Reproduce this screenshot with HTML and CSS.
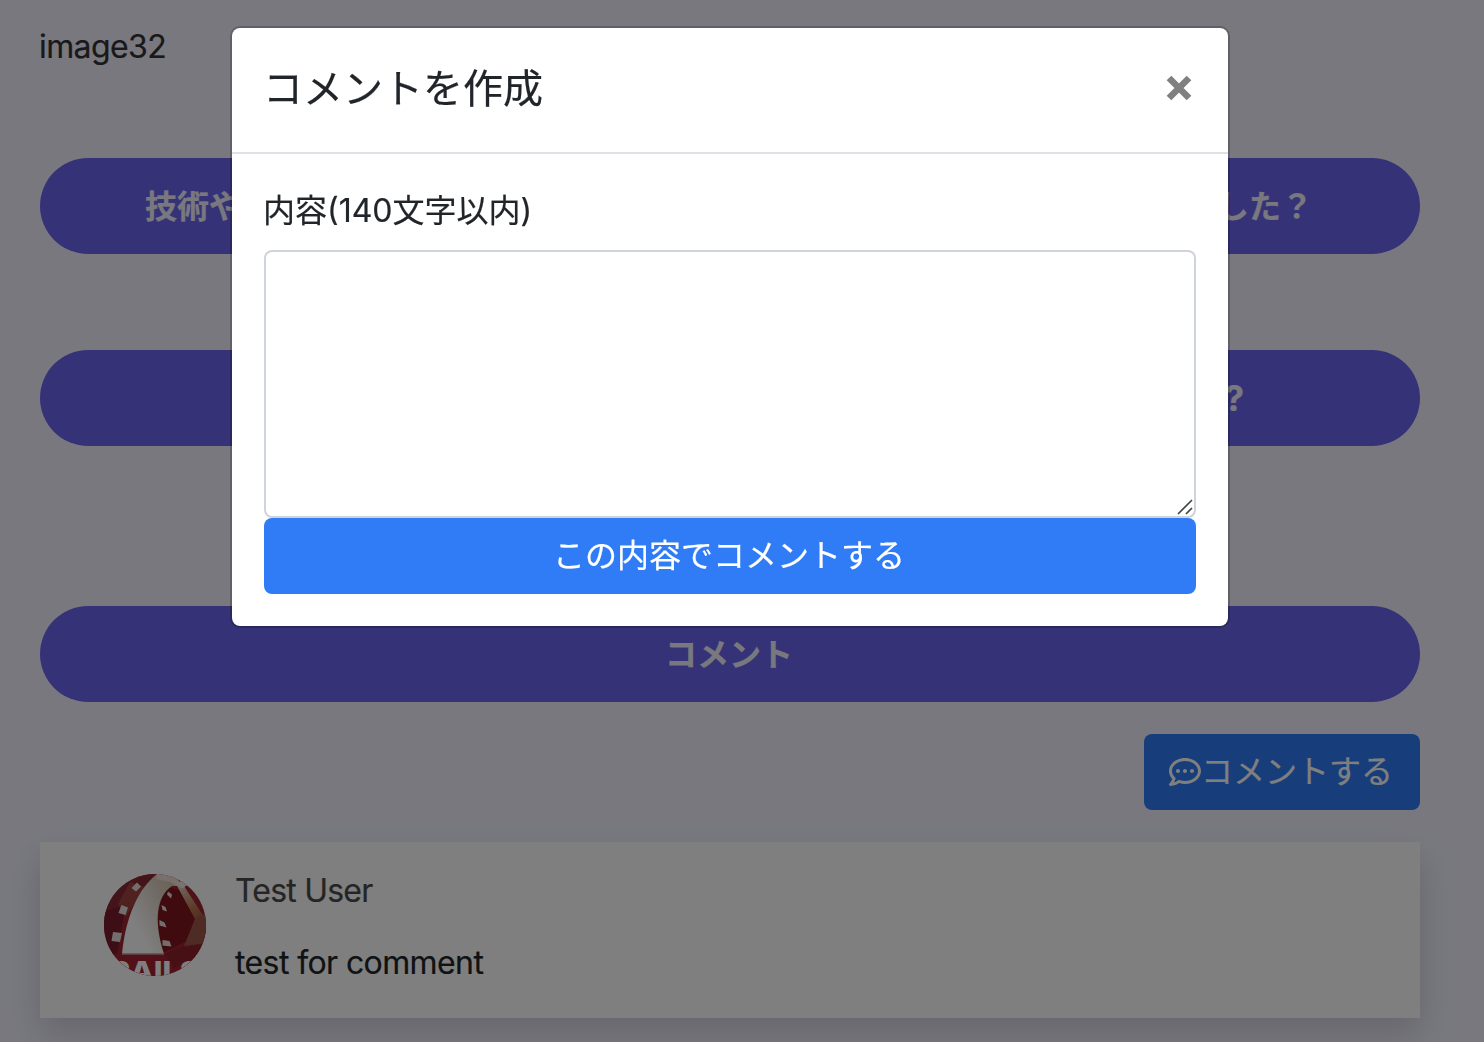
FILE: index.html
```html
<!DOCTYPE html>
<html lang="ja">
<head>
<meta charset="utf-8">
<title>コメントを作成</title>
<link rel="stylesheet" href="styles.css">
</head>
<body>
<main class="page">
  <p class="image-name">image32</p>
  <h2 class="pill pill-first"><span>技術や</span><span>した？</span></h2>
  <h2 class="pill pill-second"><span>?</span></h2>
  <h2 class="pill pill-comment"><span>コメント</span></h2>
  <div class="actions">
    <button class="btn btn-open" type="button">
      <svg class="icon-comment" viewBox="0 0 512 512" aria-hidden="true"><path fill="currentColor" d="M144 208c-17.700 0-32 14.300-32 32s14.300 32 32 32 32-14.300 32-32-14.300-32-32-32zm112 0c-17.700 0-32 14.300-32 32s14.300 32 32 32 32-14.300 32-32-14.300-32-32-32zm112 0c-17.700 0-32 14.300-32 32s14.300 32 32 32 32-14.300 32-32-14.300-32-32-32zM256 32C114.600 32 0 125.100 0 240c0 47.600 19.900 91.200 52.900 126.300C38 405.700 7 439.100 6.500 439.500c-6.600 7-8.400 17.200-4.600 26S14.400 480 24 480c61.500 0 110-25.700 139.100-46.300C192 442.800 223.200 448 256 448c141.400 0 256-93.100 256-208S397.400 32 256 32zm0 368c-26.700 0-53.100-4.100-78.400-12.100l-22.700-7.200-19.500 13.800c-14.300 10.100-33.900 21.400-57.500 29 7.300-12.100 14.400-25.700 19.900-40.200l10.600-28.100-20.600-21.800C69.700 314.100 48 282.200 48 240c0-88.200 93.300-160 208-160s208 71.800 208 160-93.300 160-208 160z"/></svg><span>コメントする</span>
    </button>
  </div>
  <article class="card">
    <svg class="avatar" viewBox="0 0 102 102" aria-hidden="true">
      <defs>
        <clipPath id="round"><circle cx="51" cy="51" r="51"/></clipPath>
        <linearGradient id="film" x1="1" y1="0" x2="0.2" y2="0.6"><stop offset="0" stop-color="#d3bd9d"/><stop offset=".45" stop-color="#ded3c7"/><stop offset="1" stop-color="#fffefe"/></linearGradient>
        <linearGradient id="gold" x1="0" y1="0" x2="0.3" y2="1"><stop offset="0" stop-color="#ead6d6"/><stop offset=".5" stop-color="#b97a4f"/><stop offset="1" stop-color="#8b3038"/></linearGradient>
      </defs>
      <g clip-path="url(#round)">
        <rect width="102" height="102" fill="#9c2633"/>
        <path d="M0 0h50L26 32 0 45z" fill="#872a34"/>
        <path d="M0 38l22-8-9 50-13 5z" fill="#7b1c2a"/>
        <path d="M14 30l12-22 14 5-18 30z" fill="#a1453f"/>
        <path d="M60 12l20 5 11 28-10 29-21 7-9-27z" fill="#80161c"/>
        <path d="M56 80l25-12 21 4v30H0V78l30 4z" fill="#a52331"/>
        <path d="M60 80l21-9 21-22v30L70 94z" fill="#8e2028"/>
        <path d="M72 10l8 2 22 34v24l-21 3 10-28z" fill="url(#gold)"/>
        <path d="M91 45l11-6v30l-22 3z" fill="#9c5748"/>
        <path d="M18 80C22 42 34 15 53 0l12 2 13 10-10 0C53 22 49 45 60 80z" fill="url(#film)"/>
        <path d="M53 0h16l12 14-4 0-11-6-14-3z" fill="#eee0d8"/>
        <path d="M18 80h42" stroke="#c79798" stroke-width="1.500"/>
        <g fill="#e9dede">
          <path d="M33 8.500l4 4-5 5-4.500-3.500z"/><path d="M17.500 31l6.500 2.500-2.500 7.500-7-2z"/><path d="M9 58l9 1-2 9-8.500-1z"/>
          <path d="M64 17.500l4 3-1 4-4-4z"/><path d="M57.500 31l4 2 1.500 4.500-4.500-1.500z"/><path d="M55.500 46l5 2.500 2 5-7-2z"/><path d="M58.500 66l7 1 2 5.500-9-1z"/>
        </g>
        <path d="M72 10l5-3 7 4-6 3z" fill="#f3e6e5"/>
        <text x="51" y="107" text-anchor="middle" textLength="90" lengthAdjust="spacingAndGlyphs" class="avatar-word">RAILS</text>
      </g>
    </svg>
    <div class="card-text">
      <p class="user">Test User</p>
      <p class="comment">test for comment</p>
    </div>
  </article>
</main>

<div class="backdrop">
  <section class="modal" role="dialog" aria-modal="true">
    <header class="modal-header">
      <h1 class="modal-title">コメントを作成</h1>
      <button class="close" type="button" aria-label="閉じる">
        <svg viewBox="0 0 26 26"><path d="M3 3l20 20M23 3L3 23" stroke="#808080" stroke-width="6.600"/></svg>
      </button>
    </header>
    <div class="modal-body">
      <label class="label" for="content">内容(140文字以内)</label>
      <div class="field">
        <textarea id="content"></textarea>
        <svg class="grip" viewBox="0 0 16 16" aria-hidden="true"><path d="M1 15L15 1M9 15l6-6" stroke="#444" stroke-width="1.700"/></svg>
      </div>
      <button class="btn btn-submit" type="button"><span>この内容でコメントする</span></button>
    </div>
  </section>
</div>
</body>
</html>
```
FILE: styles.css
```css
* { box-sizing: border-box; }

body {
  margin: 0;
  height: 1042px;
  overflow: hidden;
  background: #f2f1ff;
  color: #212529;
  font: 32px/48px Inter, "Noto Sans CJK JP", sans-serif;
  -webkit-text-stroke: 0.2px currentColor;
}

p, h1, h2 { margin: 0; }

button { font: inherit; }

.page {
  display: flex;
  flex-direction: column;
  padding: 23px 64px 0 40px;
}

.image-name {
  height: 48px;
  margin-left: -1px;
  color: #333;
  letter-spacing: -0.6px;
}

.pill {
  display: flex;
  align-items: center;
  justify-content: center;
  height: 96px;
  padding: 1px 2px 0 0;
  border-radius: 48px;
  background: #6b64f0;
  color: #f2f1ff;
  font-size: 32px;
  font-weight: 700;
}

.pill-first {
  justify-content: space-between;
  margin-top: 87px;
  padding: 1px 107px 0 105px;
}

.pill-second {
  justify-content: flex-end;
  margin-top: 96px;
  padding: 0 176px 0 0;
  font-size: 35px;
}

.pill-comment { margin-top: 160px; }

.actions {
  display: flex;
  justify-content: flex-end;
  margin: 32px 0;
}

.btn {
  display: flex;
  align-items: center;
  justify-content: center;
  height: 76px;
  padding: 0 2px 0 0;
  border: 0;
  border-radius: 8px;
  background: #2f7cf6;
  color: #fff;
}

.btn-open { width: 276px; }

.icon-comment {
  width: 32px;
  height: 32px;
}

.card {
  display: flex;
  height: 176px;
  padding: 32px 64px;
  background: #fff;
  box-shadow: 0 16px 32px rgba(0, 0, 0, 0.15);
}

.avatar {
  width: 102px;
  height: 102px;
}

.avatar-word {
  fill: #fff;
  font: 800 27px Inter, sans-serif;
}

.card-text {
  margin: -7px 0 0 29px;
}

.user {
  color: #4a4a4a;
  letter-spacing: -0.8px;
}

.comment {
  margin-top: 24px;
  letter-spacing: -0.6px;
}

.backdrop {
  position: fixed;
  inset: 0;
  display: flex;
  align-items: flex-start;
  padding: 26px 0 0 230px;
  background: rgba(0, 0, 0, 0.5);
}

.modal {
  width: 1000px;
  height: 602px;
  border: 2px solid rgba(0, 0, 0, 0.2);
  border-radius: 10px;
  background: #fff;
  background-clip: padding-box;
}

.modal-header {
  display: flex;
  align-items: center;
  justify-content: space-between;
  height: 126px;
  padding: 0 36px 4px 31px;
  border-bottom: 2px solid #dee2e6;
}

.modal-title {
  padding-top: 2px;
  font-size: 40px;
  font-weight: 400;
  line-height: 60px;
}

.close {
  display: flex;
  padding: 0;
  border: 0;
  background: none;
}

.close svg {
  width: 26px;
  height: 26px;
}

.modal-body {
  display: flex;
  flex-direction: column;
  padding: 33px 32px 32px;
}

.label {
  height: 48px;
  margin: 0 0 15px -1px;
}

.field {
  position: relative;
  display: flex;
  height: 268px;
}

textarea {
  flex: 1;
  padding: 12px 24px;
  border: 2px solid #ced4da;
  border-radius: 8px;
  background: #fff;
  font: inherit;
  resize: none;
}

.grip {
  position: absolute;
  right: 3px;
  bottom: 3px;
  width: 16px;
  height: 16px;
}
```
